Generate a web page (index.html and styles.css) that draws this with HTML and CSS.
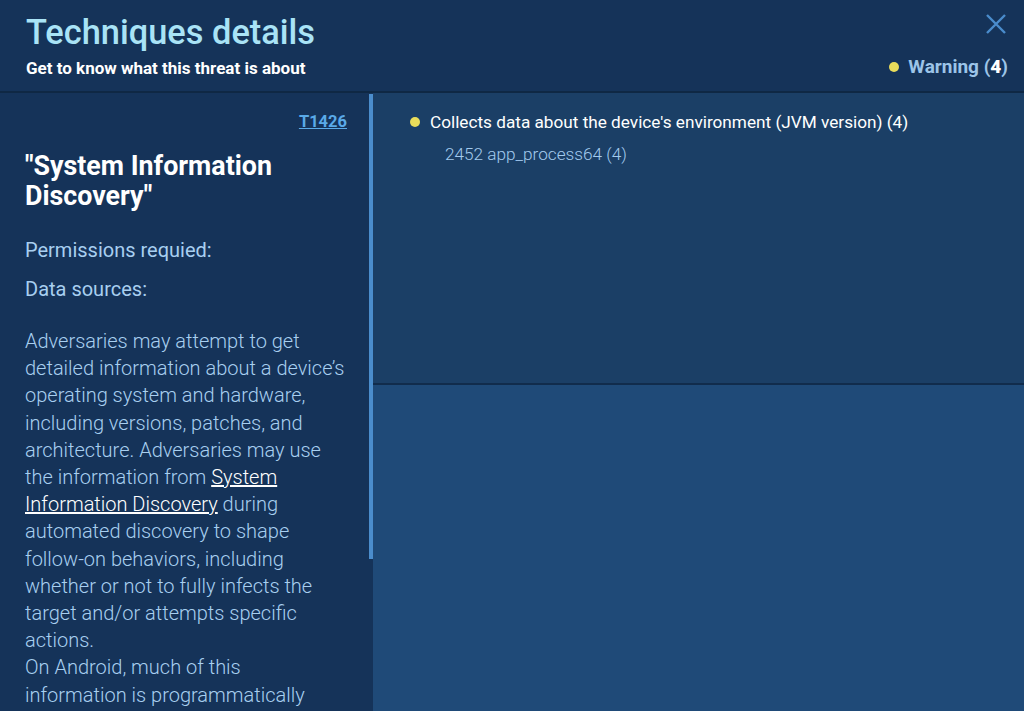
FILE: index.html
```html
<!DOCTYPE html>
<html lang="en">
<head>
<meta charset="utf-8">
<title>Techniques details</title>
<link rel="stylesheet" href="styles.css">
</head>
<body>
<div class="modal">
  <header class="header">
    <div class="header-text">
      <h1 class="title">Techniques details</h1>
      <p class="subtitle">Get to know what this threat is about</p>
    </div>
    <div class="header-side">
      <button class="close" aria-label="Close">
        <svg width="22" height="22" viewBox="0 0 22 22"><path d="M2 2L20 20M20 2L2 20" stroke="#4a8ccc" stroke-width="2.4" fill="none"/></svg>
      </button>
      <div class="severity"><span class="dot"></span><span class="sev-label">Warning (<b class="sev-count">4</b>)</span></div>
    </div>
  </header>
  <main class="body">
    <aside class="side">
      <div class="side-content">
        <div class="tid-row"><a class="tid" href="#">T1426</a></div>
        <h2 class="tech-name">"System Information Discovery"</h2>
        <p class="meta">Permissions requied:</p>
        <p class="meta">Data sources:</p>
        <p class="desc">Adversaries may attempt to get detailed information about a device’s operating system and hardware, including versions, patches, and architecture. Adversaries may use the information from <a class="inline-link" href="#">System Information Discovery</a> during automated discovery to shape follow-on behaviors, including whether or not to fully infects the target and/or attempts specific actions.<br>On Android, much of this information is programmatically</p>
      </div>
      <div class="scrollbar"><div class="thumb"></div></div>
    </aside>
    <section class="detail">
      <div class="events">
        <div class="event"><span class="dot"></span><span>Collects data about the device's environment (JVM version) (4)</span></div>
        <div class="process">2452 app_process64 (4)</div>
      </div>
      <div class="lower"></div>
    </section>
  </main>
</div>
</body>
</html>
```
FILE: styles.css
```css
* { box-sizing: border-box; }
html, body { margin: 0; padding: 0; }
body {
  width: 1024px;
  height: 711px;
  overflow: hidden;
  background: #153359;
  font-family: Roboto, "Liberation Sans", sans-serif;
}
.modal { display: flex; flex-direction: column; height: 711px; }
.header {
  height: 93px;
  flex: none;
  display: flex;
  justify-content: space-between;
  padding: 0 16px 0 26px;
  background: #153359;
  border-bottom: 2px solid #0f2844;
}
.title {
  margin: 12px 0 0;
  font-size: 34.4px;
  font-weight: 500;
  color: #a9e3f6;
  line-height: 40px;
}
.subtitle {
  margin: 6px 0 0;
  font-size: 17px;
  font-weight: 700;
  color: #ffffff;
  line-height: 20px;
}
.header-side {
  display: flex;
  flex-direction: column;
  align-items: flex-end;
}
.close {
  margin: 13px 1px 0 0;
  padding: 0;
  border: 0;
  background: none;
  width: 22px;
  height: 22px;
  display: block;
}
.severity {
  margin-top: 20px;
  display: flex;
  align-items: center;
  gap: 9px;
  font-size: 19px;
  font-weight: 700;
  color: #9cc4e8;
}
.sev-count { color: #ffffff; }
.dot {
  width: 10px;
  height: 10px;
  border-radius: 50%;
  background: #e9dd5b;
  flex: none;
}
.body { flex: 1; display: flex; min-height: 0; }
.side {
  width: 373px;
  flex: none;
  display: flex;
  background: #153359;
  overflow: hidden;
}
.side-content {
  width: 369px;
  flex: none;
  padding: 19px 22px 0 25px;
}
.scrollbar { width: 4px; flex: none; padding-top: 1px; }
.thumb { height: 465px; background: #4b8dcc; }
.tid-row { display: flex; justify-content: flex-end; }
.tid {
  font-size: 16.5px;
  font-weight: 700;
  color: #5aaae8;
  text-decoration: underline;
  line-height: 20px;
}
.tech-name {
  margin: 19px 0 0;
  font-size: 26.8px;
  font-weight: 700;
  color: #ffffff;
  line-height: 30px;
}
.meta {
  margin: 29px 0 0;
  font-size: 20px;
  font-weight: 400;
  color: #a8cff0;
  line-height: 20px;
}
.meta + .meta { margin-top: 19px; }
.desc {
  margin: 29px 0 0;
  font-size: 20px;
  font-weight: 300;
  color: #a8cff0;
  line-height: 27.2px;
}
.inline-link { color: #ffffff; text-decoration: underline; }
.detail { flex: 1; display: flex; flex-direction: column; }
.events {
  height: 292px;
  flex: none;
  background: #1b3f66;
  border-bottom: 2px solid #112c4c;
  padding: 18px 0 0 37px;
}
.event {
  display: flex;
  align-items: center;
  gap: 10px;
  font-size: 17.2px;
  color: #ffffff;
  line-height: 22px;
}
.process {
  margin: 10px 0 0 35px;
  font-size: 17.2px;
  font-weight: 300;
  color: #a3cbee;
  line-height: 22px;
}
.lower { flex: 1; background: #1f4a78; }
```
